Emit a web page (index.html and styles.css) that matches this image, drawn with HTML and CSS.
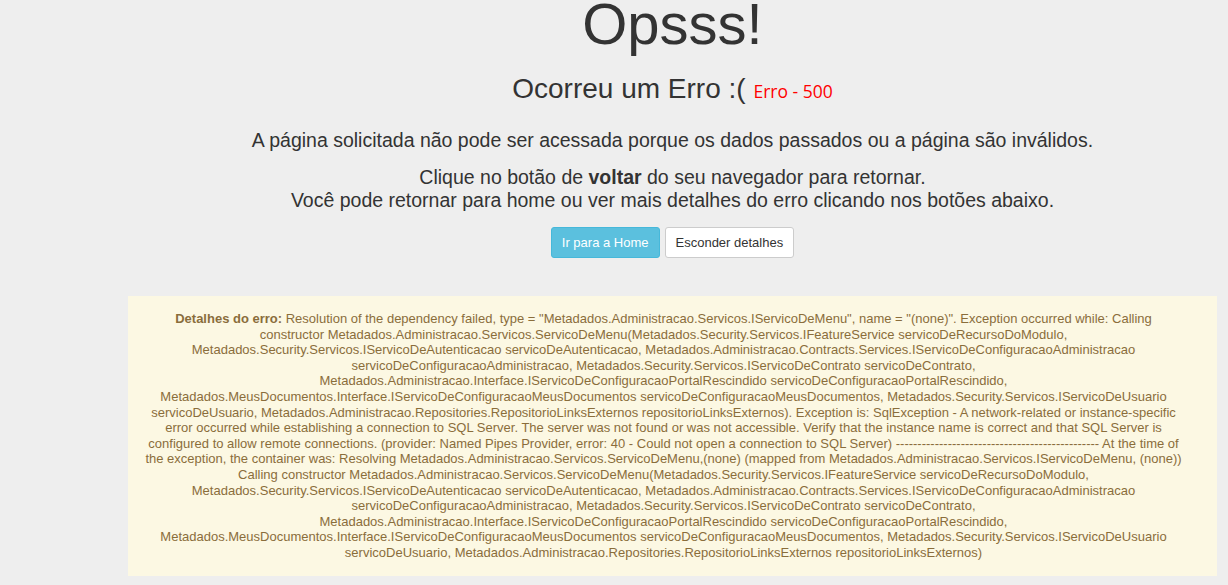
FILE: index.html
```html
<!DOCTYPE html>
<html lang="pt-BR">
<head>
  <meta charset="UTF-8" />
  <meta name="viewport" content="width=device-width, initial-scale=1.0"/>
  <title>Erro</title>
  <link rel="stylesheet" href="styles.css">
</head>
<body>
  <div class="page">
    <h1 class="title">Opsss!</h1>
    <h3 class="subtitle">Ocorreu um Erro :( <small class="code">Erro - 500</small></h3>
    <p class="lead">A página solicitada não pode ser acessada porque os dados passados ou a página são inválidos.</p>
    <p class="lead">Clique no botão de <strong>voltar</strong> do seu navegador para retornar.<br>Você pode retornar para home ou ver mais detalhes do erro clicando nos botões abaixo.</p>
    <div class="actions">
      <button class="btn btn-info">Ir para a Home</button>
      <button class="btn btn-default">Esconder detalhes</button>
    </div>
    <div class="details">
      <strong>Detalhes do erro:</strong> Resolution of the dependency failed, type = "Metadados.Administracao.Servicos.IServicoDeMenu", name = "(none)". Exception occurred while: Calling constructor Metadados.Administracao.Servicos.ServicoDeMenu(Metadados.Security.Servicos.IFeatureService servicoDeRecursoDoModulo, Metadados.Security.Servicos.IServicoDeAutenticacao servicoDeAutenticacao, Metadados.Administracao.Contracts.Services.IServicoDeConfiguracaoAdministracao servicoDeConfiguracaoAdministracao, Metadados.Security.Servicos.IServicoDeContrato servicoDeContrato, Metadados.Administracao.Interface.IServicoDeConfiguracaoPortalRescindido servicoDeConfiguracaoPortalRescindido, Metadados.MeusDocumentos.Interface.IServicoDeConfiguracaoMeusDocumentos servicoDeConfiguracaoMeusDocumentos, Metadados.Security.Servicos.IServicoDeUsuario servicoDeUsuario, Metadados.Administracao.Repositories.RepositorioLinksExternos repositorioLinksExternos). Exception is: SqlException - A network-related or instance-specific error occurred while establishing a connection to SQL Server. The server was not found or was not accessible. Verify that the instance name is correct and that SQL Server is configured to allow remote connections. (provider: Named Pipes Provider, error: 40 - Could not open a connection to SQL Server) ----------------------------------------------- At the time of the exception, the container was: Resolving Metadados.Administracao.Servicos.ServicoDeMenu,(none) (mapped from Metadados.Administracao.Servicos.IServicoDeMenu, (none)) Calling constructor Metadados.Administracao.Servicos.ServicoDeMenu(Metadados.Security.Servicos.IFeatureService servicoDeRecursoDoModulo, Metadados.Security.Servicos.IServicoDeAutenticacao servicoDeAutenticacao, Metadados.Administracao.Contracts.Services.IServicoDeConfiguracaoAdministracao servicoDeConfiguracaoAdministracao, Metadados.Security.Servicos.IServicoDeContrato servicoDeContrato, Metadados.Administracao.Interface.IServicoDeConfiguracaoPortalRescindido servicoDeConfiguracaoPortalRescindido, Metadados.MeusDocumentos.Interface.IServicoDeConfiguracaoMeusDocumentos servicoDeConfiguracaoMeusDocumentos, Metadados.Security.Servicos.IServicoDeUsuario servicoDeUsuario, Metadados.Administracao.Repositories.RepositorioLinksExternos repositorioLinksExternos)
    </div>
  </div>
</body>
</html>
```

FILE: styles.css
```css
body {
  margin: 0;
  background: #eee;
  color: #333;
  font-family: "Liberation Sans", Arial, sans-serif;
  overflow: hidden;
}
.page {
  width: 1089px;
  margin-left: 128px;
  text-align: center;
}
.title {
  font-size: 58px;
  font-weight: normal;
  line-height: 64px;
  margin: -8px 0 0;
}
.subtitle {
  font-size: 28px;
  font-weight: normal;
  line-height: 30px;
  margin: 18px 0 25px;
}
.code {
  font-family: "Open Sans", "Noto Sans", sans-serif;
  font-size: 17.5px;
  line-height: 1;
  color: #f00;
}
.lead {
  font-size: 19.5px;
  line-height: 23px;
  margin: 0 0 14px;
}
.actions {
  display: flex;
  justify-content: center;
  gap: 5px;
  margin-top: 15px;
}
.btn {
  font-family: inherit;
  font-size: 13px;
  line-height: 19px;
  padding: 5px 10px;
  border: 1px solid transparent;
  border-radius: 3px;
  cursor: pointer;
}
.btn-info {
  background: #5bc0de;
  border-color: #46b8da;
  color: #fff;
}
.btn-default {
  background: #fff;
  border-color: #ccc;
  color: #333;
}
/* texto do erro fica um pouco à esquerda do centro da caixa */
.details {
  margin-top: 38px;
  padding: 15px 32px 15px 14px;
  background: #fcf8e3;
  color: #8a6d3b;
  font-size: 13px;
  line-height: 15.6px;
}
```
